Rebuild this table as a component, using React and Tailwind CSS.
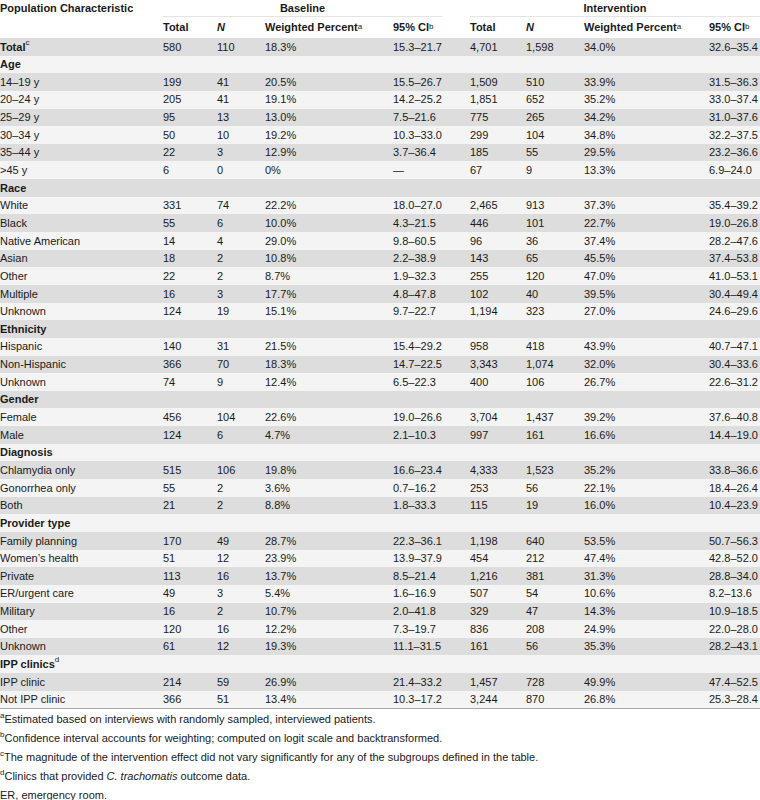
import React from 'react';

const COLS = 'grid grid-cols-[163px_54px_48px_128px_77px_56px_58px_125px_51px]';

// label, then baseline (total, n, pct, ci), then intervention (total, n, pct, ci)
const rows = [
  { label: 'Total', sup: 'c', bold: true, v: ['580', '110', '18.3%', '15.3–21.7', '4,701', '1,598', '34.0%', '32.6–35.4'] },
  { label: 'Age', bold: true },
  { label: '14–19 y', v: ['199', '41', '20.5%', '15.5–26.7', '1,509', '510', '33.9%', '31.5–36.3'] },
  { label: '20–24 y', v: ['205', '41', '19.1%', '14.2–25.2', '1,851', '652', '35.2%', '33.0–37.4'] },
  { label: '25–29 y', v: ['95', '13', '13.0%', '7.5–21.6', '775', '265', '34.2%', '31.0–37.6'] },
  { label: '30–34 y', v: ['50', '10', '19.2%', '10.3–33.0', '299', '104', '34.8%', '32.2–37.5'] },
  { label: '35–44 y', v: ['22', '3', '12.9%', '3.7–36.4', '185', '55', '29.5%', '23.2–36.6'] },
  { label: '>45 y', v: ['6', '0', '0%', '—', '67', '9', '13.3%', '6.9–24.0'] },
  { label: 'Race', bold: true },
  { label: 'White', v: ['331', '74', '22.2%', '18.0–27.0', '2,465', '913', '37.3%', '35.4–39.2'] },
  { label: 'Black', v: ['55', '6', '10.0%', '4.3–21.5', '446', '101', '22.7%', '19.0–26.8'] },
  { label: 'Native American', v: ['14', '4', '29.0%', '9.8–60.5', '96', '36', '37.4%', '28.2–47.6'] },
  { label: 'Asian', v: ['18', '2', '10.8%', '2.2–38.9', '143', '65', '45.5%', '37.4–53.8'] },
  { label: 'Other', v: ['22', '2', '8.7%', '1.9–32.3', '255', '120', '47.0%', '41.0–53.1'] },
  { label: 'Multiple', v: ['16', '3', '17.7%', '4.8–47.8', '102', '40', '39.5%', '30.4–49.4'] },
  { label: 'Unknown', v: ['124', '19', '15.1%', '9.7–22.7', '1,194', '323', '27.0%', '24.6–29.6'] },
  { label: 'Ethnicity', bold: true },
  { label: 'Hispanic', v: ['140', '31', '21.5%', '15.4–29.2', '958', '418', '43.9%', '40.7–47.1'] },
  { label: 'Non-Hispanic', v: ['366', '70', '18.3%', '14.7–22.5', '3,343', '1,074', '32.0%', '30.4–33.6'] },
  { label: 'Unknown', v: ['74', '9', '12.4%', '6.5–22.3', '400', '106', '26.7%', '22.6–31.2'] },
  { label: 'Gender', bold: true },
  { label: 'Female', v: ['456', '104', '22.6%', '19.0–26.6', '3,704', '1,437', '39.2%', '37.6–40.8'] },
  { label: 'Male', v: ['124', '6', '4.7%', '2.1–10.3', '997', '161', '16.6%', '14.4–19.0'] },
  { label: 'Diagnosis', bold: true },
  { label: 'Chlamydia only', v: ['515', '106', '19.8%', '16.6–23.4', '4,333', '1,523', '35.2%', '33.8–36.6'] },
  { label: 'Gonorrhea only', v: ['55', '2', '3.6%', '0.7–16.2', '253', '56', '22.1%', '18.4–26.4'] },
  { label: 'Both', v: ['21', '2', '8.8%', '1.8–33.3', '115', '19', '16.0%', '10.4–23.9'] },
  { label: 'Provider type', bold: true },
  { label: 'Family planning', v: ['170', '49', '28.7%', '22.3–36.1', '1,198', '640', '53.5%', '50.7–56.3'] },
  { label: 'Women’s health', v: ['51', '12', '23.9%', '13.9–37.9', '454', '212', '47.4%', '42.8–52.0'] },
  { label: 'Private', v: ['113', '16', '13.7%', '8.5–21.4', '1,216', '381', '31.3%', '28.8–34.0'] },
  { label: 'ER/urgent care', v: ['49', '3', '5.4%', '1.6–16.9', '507', '54', '10.6%', '8.2–13.6'] },
  { label: 'Military', v: ['16', '2', '10.7%', '2.0–41.8', '329', '47', '14.3%', '10.9–18.5'] },
  { label: 'Other', v: ['120', '16', '12.2%', '7.3–19.7', '836', '208', '24.9%', '22.0–28.0'] },
  { label: 'Unknown', v: ['61', '12', '19.3%', '11.1–31.5', '161', '56', '35.3%', '28.2–43.1'] },
  { label: 'IPP clinics', sup: 'd', bold: true },
  { label: 'IPP clinic', v: ['214', '59', '26.9%', '21.4–33.2', '1,457', '728', '49.9%', '47.4–52.5'] },
  { label: 'Not IPP clinic', v: ['366', '51', '13.4%', '10.3–17.2', '3,244', '870', '26.8%', '25.3–28.4'] },
];

const Sup = ({ children }) => (
  <sup className="text-[8px] font-normal relative -top-[1px] align-super">{children}</sup>
);

const SubHead = ({ children }) => (
  <div className="flex h-[21px] items-center font-bold">{children}</div>
);

const App = () => {
  return (
    <div className="w-[760px] h-[800px] overflow-hidden bg-white text-[11px] text-[#1a1a1a] font-['Liberation_Sans',Arial,sans-serif]">

      {/* HEADER */}
      <div className={COLS}>
        <div className="h-[17px] flex items-center font-bold">Population Characteristic</div>
        <div className="col-span-4 mr-[28px] h-[17px] flex items-center justify-center font-bold border-b border-[#e4e4e4]">Baseline</div>
        <div className="col-span-4 h-[17px] flex items-center justify-center font-bold border-b border-[#e4e4e4]">Intervention</div>

        <div />
        <SubHead>Total</SubHead>
        <SubHead><span className="italic">N</span></SubHead>
        <SubHead>Weighted Percent<Sup>a</Sup></SubHead>
        <SubHead>95% CI<Sup>b</Sup></SubHead>
        <SubHead>Total</SubHead>
        <SubHead><span className="italic">N</span></SubHead>
        <SubHead>Weighted Percent<Sup>a</Sup></SubHead>
        <SubHead>95% CI<Sup>b</Sup></SubHead>
      </div>

      {/* BODY */}
      <div className="border-b border-[#a8a8a8]">
        {rows.map((r, i) => (
          <div
            key={i}
            className={`${COLS} h-[17.65px] items-center ${i % 2 === 0 ? 'bg-[#dddddd]' : 'bg-[#f4f4f4]'}`}
          >
            <div className={r.bold ? 'font-bold' : ''}>
              {r.label}
              {r.sup && <Sup>{r.sup}</Sup>}
            </div>
            {r.v && r.v.map((c, j) => <div key={j}>{c}</div>)}
          </div>
        ))}
      </div>

      {/* FOOTNOTES */}
      <div className="pt-[1px] leading-[19px]">
        <p><Sup>a</Sup>Estimated based on interviews with randomly sampled, interviewed patients.</p>
        <p><Sup>b</Sup>Confidence interval accounts for weighting; computed on logit scale and backtransformed.</p>
        <p><Sup>c</Sup>The magnitude of the intervention effect did not vary significantly for any of the subgroups defined in the table.</p>
        <p><Sup>d</Sup>Clinics that provided <span className="italic">C. trachomatis</span> outcome data.</p>
        <p>ER, emergency room.</p>
      </div>
    </div>
  );
};

export default App;
